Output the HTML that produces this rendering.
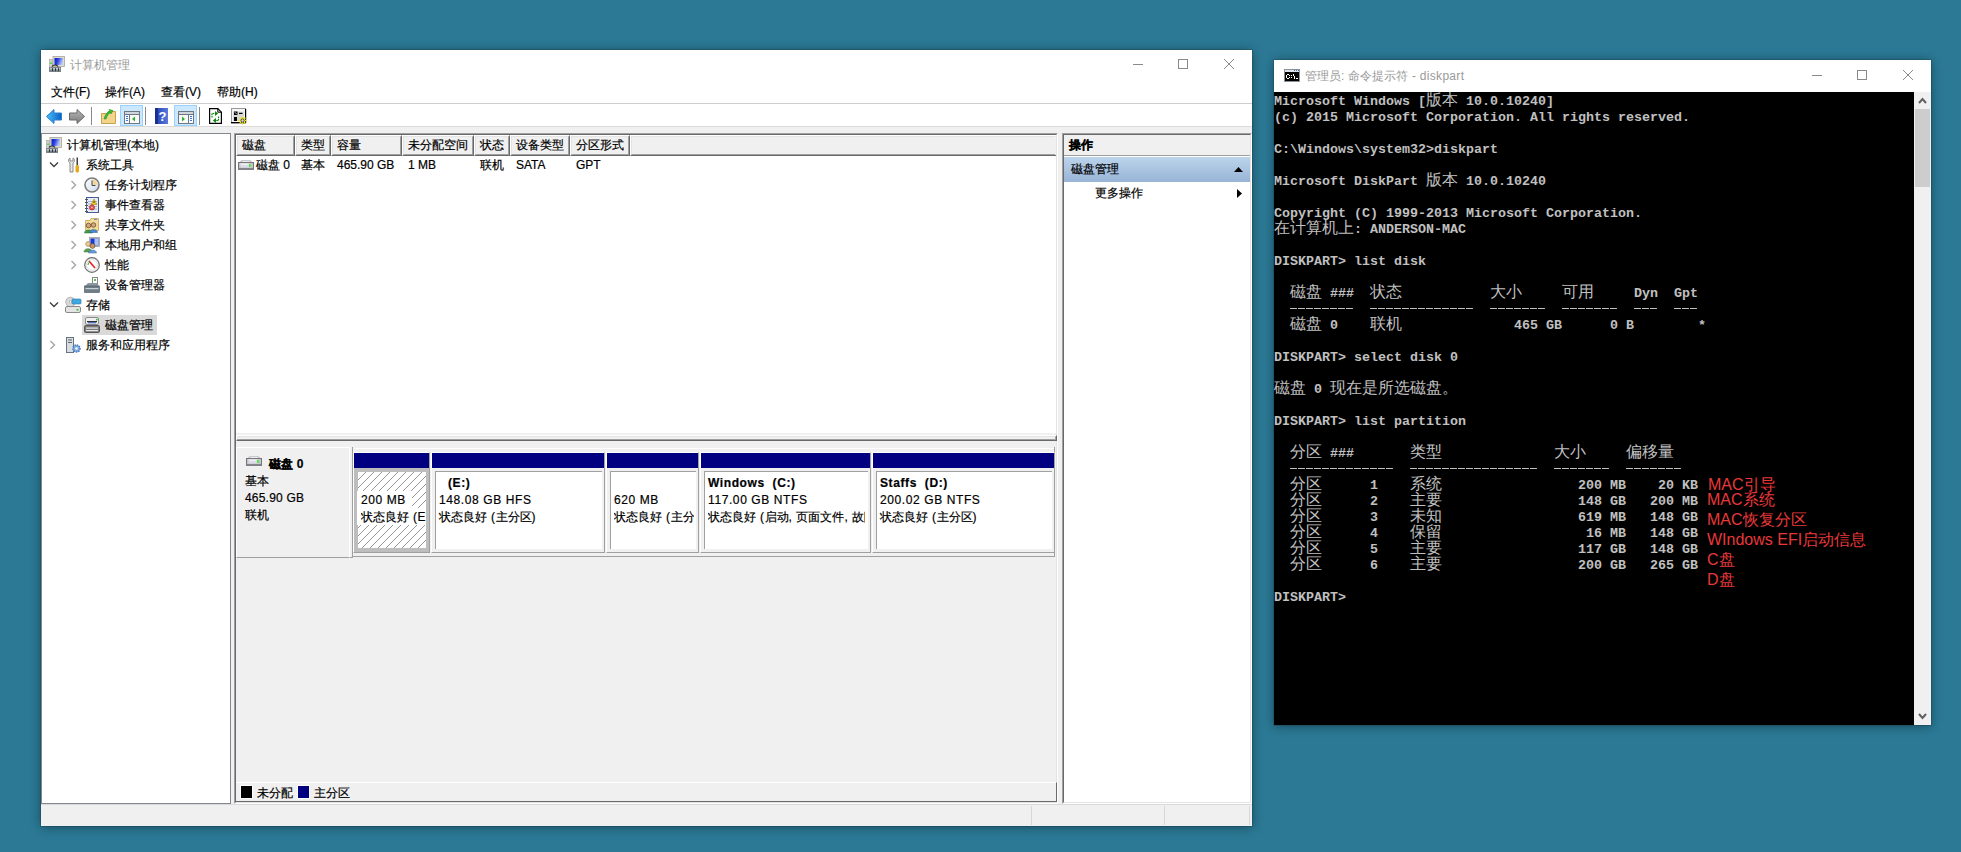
<!DOCTYPE html>
<html><head><meta charset="utf-8"><style>
html,body{margin:0;padding:0}
body{width:1961px;height:852px;position:relative;overflow:hidden;background:#2b7995;font-family:"Liberation Sans",sans-serif;font-size:12px;color:#000}
div{box-sizing:border-box;-webkit-text-stroke:0.2px currentColor}
.c,.k{-webkit-text-stroke:0}
.c{font-family:"Liberation Mono",monospace;font-weight:bold;font-size:13.34px;color:#c0c0c0}
.k{font-family:"Liberation Sans",sans-serif;font-weight:normal;font-size:16px;color:#c0c0c0}
svg{position:absolute;overflow:visible}
</style></head><body>

<div style="position:absolute;left:41px;top:50px;width:1211px;height:776px;background:#fff;box-shadow:0 0 0 1px rgba(0,0,0,0.12),0 1px 10px rgba(0,0,0,0.42)"></div>
<svg style="left:49px;top:56px" width="16" height="16" viewBox="0 0 16 16"><defs><linearGradient id="scr2" x1="0" y1="0" x2="1" y2="0.3"><stop offset="0" stop-color="#0a18c8"/><stop offset="0.45" stop-color="#2a40e0"/><stop offset="1" stop-color="#b8c8f8"/></linearGradient></defs><rect x="0.5" y="3.5" width="3" height="8" fill="#d0d0d0" stroke="#909090" stroke-width="0.5"/><rect x="1" y="6.5" width="2" height="1.5" fill="#40e040"/><rect x="4" y="0.5" width="11.5" height="10" fill="#e0ddd0" stroke="#a8a498" stroke-width="0.8"/><rect x="5.5" y="2" width="8.5" height="7" fill="url(#scr2)"/><path d="M3 10.5 C4 8.5 8 8.5 9 10.5" stroke="#222" stroke-width="1.2" fill="none"/><rect x="0" y="11" width="12" height="5" fill="#7a868e"/><rect x="1" y="12.2" width="10" height="1.2" fill="#d8dee2"/><rect x="3" y="12.2" width="1" height="3" fill="#333"/><rect x="6" y="12.2" width="1" height="3" fill="#333"/><rect x="9" y="12.2" width="1" height="3" fill="#333"/></svg>
<div style="position:absolute;left:70px;top:57px;line-height:16px;white-space:pre;color:#9a9a9a;font-size:12px;-webkit-text-stroke:0">计算机管理</div>
<svg style="left:1128px;top:54px" width="20" height="20"><line x1="5" y1="10.5" x2="15" y2="10.5" stroke="#8a8a8a" stroke-width="1"/></svg>
<svg style="left:1173px;top:54px" width="20" height="20"><rect x="5.5" y="5.5" width="9" height="9" fill="none" stroke="#8a8a8a" stroke-width="1"/></svg>
<svg style="left:1219px;top:54px" width="20" height="20"><path d="M5 5 L15 15 M15 5 L5 15" stroke="#8a8a8a" stroke-width="1"/></svg>
<div style="position:absolute;left:51px;top:84px;line-height:16px;white-space:pre;font-size:12px">文件(F)</div>
<div style="position:absolute;left:105px;top:84px;line-height:16px;white-space:pre;font-size:12px">操作(A)</div>
<div style="position:absolute;left:161px;top:84px;line-height:16px;white-space:pre;font-size:12px">查看(V)</div>
<div style="position:absolute;left:217px;top:84px;line-height:16px;white-space:pre;font-size:12px">帮助(H)</div>
<div style="position:absolute;left:41px;top:103px;width:1211px;height:1px;background:#cdcdcd"></div>
<svg style="left:46px;top:109px" width="16" height="15" viewBox="0 0 16 15">
<defs><linearGradient id="gb" x1="0" y1="0" x2="1" y2="0"><stop offset="0" stop-color="#48c0ff"/><stop offset="1" stop-color="#0a5fc0"/></linearGradient></defs>
<path d="M0.5 7.5 L8 0.5 L8 4 L15.5 4 L15.5 11 L8 11 L8 14.5 Z" fill="url(#gb)" stroke="#2f7fd0" stroke-width="1"/></svg>
<svg style="left:69px;top:109px" width="16" height="15" viewBox="0 0 16 15">
<defs><linearGradient id="gg" x1="0" y1="0" x2="0" y2="1"><stop offset="0" stop-color="#b8b8b8"/><stop offset="1" stop-color="#7a7a7a"/></linearGradient></defs>
<path d="M15.5 7.5 L8 0.5 L8 4 L0.5 4 L0.5 11 L8 11 L8 14.5 Z" fill="url(#gg)" stroke="#6a6a6a" stroke-width="1"/></svg>
<div style="position:absolute;left:91px;top:107px;width:1px;height:18px;background:#888"></div>
<div style="position:absolute;left:145px;top:107px;width:1px;height:18px;background:#888"></div>
<div style="position:absolute;left:199px;top:107px;width:1px;height:18px;background:#888"></div>
<svg style="left:101px;top:109px" width="15" height="15" viewBox="0 0 15 15">
<path d="M0.5 4.5 L6 4.5 L7 2.5 L14.5 2.5 L14.5 14.5 L0.5 14.5 Z" fill="#f2d58a" stroke="#c9a050" stroke-width="1"/>
<path d="M3 10 C4 6 6 3 9 2 L8 0.5 L12 1.5 L10 5 L9.5 3.5 C7 5 6 7 5 10 Z" fill="#36c036" stroke="#229022" stroke-width="0.6"/></svg>
<div style="position:absolute;left:120px;top:105px;width:23px;height:21px;background:#cce8ff;border:1px solid #99d1ff"></div>
<div style="position:absolute;left:174px;top:105px;width:23px;height:21px;background:#cce8ff;border:1px solid #99d1ff"></div>
<svg style="left:124px;top:111px" width="16" height="13" viewBox="0 0 16 13">
<rect x="0.5" y="0.5" width="15" height="12" fill="#fafafa" stroke="#6e7880"/><rect x="1" y="1" width="14" height="2" fill="#d0d6dc"/>
<line x1="1" y1="3.5" x2="15" y2="3.5" stroke="#6e7880"/><line x1="5.5" y1="4" x2="5.5" y2="12" stroke="#6e7880"/>
<rect x="2" y="5" width="2" height="1" fill="#3a7ad0"/><rect x="2" y="7" width="2" height="1" fill="#3a7ad0"/><rect x="2" y="9" width="2" height="1" fill="#3a7ad0"/>
<path d="M11 5.5 L8 8 L11 10.5 Z" fill="#30b030"/></svg>
<svg style="left:178px;top:111px" width="16" height="13" viewBox="0 0 16 13">
<rect x="0.5" y="0.5" width="15" height="12" fill="#fafafa" stroke="#6e7880"/><rect x="1" y="1" width="14" height="2" fill="#d0d6dc"/>
<line x1="1" y1="3.5" x2="15" y2="3.5" stroke="#6e7880"/><line x1="10.5" y1="4" x2="10.5" y2="12" stroke="#6e7880"/>
<rect x="12" y="5" width="2" height="1" fill="#3a7ad0"/><rect x="12" y="7" width="2" height="1" fill="#3a7ad0"/><rect x="12" y="9" width="2" height="1" fill="#3a7ad0"/>
<path d="M4 5.5 L7 8 L4 10.5 Z" fill="#30b030"/></svg>
<svg style="left:155px;top:108px" width="13" height="16" viewBox="0 0 13 16">
<defs><linearGradient id="hb" x1="0" y1="0" x2="1" y2="0"><stop offset="0" stop-color="#2040b0"/><stop offset="1" stop-color="#5a7ae0"/></linearGradient></defs>
<rect x="0" y="0" width="13" height="16" fill="url(#hb)"/><rect x="0" y="0" width="3" height="16" fill="#1a2f90"/>
<text x="7.5" y="13" font-family="Liberation Sans" font-weight="bold" font-size="13" fill="#fff" text-anchor="middle">?</text></svg>
<svg style="left:209px;top:108px" width="13" height="16" viewBox="0 0 13 16">
<path d="M0.6 0.6 L8.8 0.6 L12.4 4.2 L12.4 15.4 L0.6 15.4 Z" fill="#fff" stroke="#000" stroke-width="1.2"/><path d="M8.8 0.6 L8.8 4.2 L12.4 4.2" fill="none" stroke="#000" stroke-width="1"/>
<path d="M3 9.5 L3 5.5 L7 5.5" fill="none" stroke="#0a8a0a" stroke-width="1.2" stroke-dasharray="1.6 0.7"/><path d="M6 3 L9.2 5.5 L6 8 Z" fill="#0a8a0a"/>
<path d="M9.5 8.5 L9.5 12.5 L6 12.5" fill="none" stroke="#0a8a0a" stroke-width="1.2" stroke-dasharray="1.6 0.7"/><path d="M7 10 L3.8 12.5 L7 15 Z" fill="#0a8a0a"/></svg>
<svg style="left:231px;top:108px" width="16" height="17" viewBox="0 0 16 17">
<rect x="0.5" y="0.5" width="14" height="14" fill="#f4f4f4" stroke="#9a9a9a"/><rect x="0" y="14" width="15" height="1.4" fill="#000"/><rect x="14" y="1" width="1.2" height="14" fill="#000"/>
<rect x="2" y="2" width="11" height="11" fill="#d8d8d8"/><rect x="2" y="2" width="11" height="1.5" fill="#f8f8f8"/>
<rect x="3" y="3.5" width="3.5" height="3.5" fill="#000"/><path d="M3.8 4.2 L5.8 6.2" stroke="#fff" stroke-width="0.8"/><rect x="8" y="4.8" width="3.5" height="1.2" fill="#000"/><rect x="3" y="9" width="3" height="4" fill="#000"/>
<g stroke="#f0e818" stroke-width="1.3" stroke-linecap="round"><path d="M11.5 9 L11.5 16"/><path d="M8 12.5 L15 12.5"/><path d="M9 10 L14 15"/><path d="M14 10 L9 15"/></g><circle cx="11.5" cy="12.5" r="1.6" fill="#d8d8d8" stroke="#000" stroke-width="0.6"/></svg>
<div style="position:absolute;left:41px;top:126px;width:1211px;height:1px;background:#dadada"></div>
<div style="position:absolute;left:41px;top:127px;width:1211px;height:677px;background:#f0f0f0"></div>
<div style="position:absolute;left:41px;top:133px;width:190px;height:671px;background:#fff;border:1px solid #828790"></div>
<svg style="left:46px;top:137px" width="16" height="16" viewBox="0 0 16 16"><defs><linearGradient id="scr" x1="0" y1="0" x2="1" y2="0.3"><stop offset="0" stop-color="#0a18c8"/><stop offset="0.45" stop-color="#2a40e0"/><stop offset="1" stop-color="#b8c8f8"/></linearGradient></defs><rect x="0.5" y="3.5" width="3" height="8" fill="#d0d0d0" stroke="#909090" stroke-width="0.5"/><rect x="1" y="6.5" width="2" height="1.5" fill="#40e040"/><rect x="4" y="0.5" width="11.5" height="10" fill="#e0ddd0" stroke="#a8a498" stroke-width="0.8"/><rect x="5.5" y="2" width="8.5" height="7" fill="url(#scr)"/><path d="M3 10.5 C4 8.5 8 8.5 9 10.5" stroke="#222" stroke-width="1.2" fill="none"/><rect x="0" y="11" width="12" height="5" fill="#7a868e"/><rect x="1" y="12.2" width="10" height="1.2" fill="#d8dee2"/><rect x="3" y="12.2" width="1" height="3" fill="#333"/><rect x="6" y="12.2" width="1" height="3" fill="#333"/><rect x="9" y="12.2" width="1" height="3" fill="#333"/></svg>
<div style="position:absolute;left:67px;top:137px;line-height:16px;white-space:pre;font-size:12px">计算机管理(本地)</div>
<svg style="left:49px;top:161px" width="10" height="7"><path d="M1 1.5 L5 5.5 L9 1.5" fill="none" stroke="#404040" stroke-width="1.4"/></svg>
<svg style="left:67px;top:157px" width="16" height="16" viewBox="0 0 16 16"><path d="M3 1 C1 2 1 5 3 6 L3 15 L6 15 L6 6 C8 5 8 2 6 1 L6 4 L3 4 Z" fill="#e8e8e8" stroke="#707070" stroke-width="0.8"/><rect x="9.5" y="0.5" width="1.5" height="8" fill="#404040"/><rect x="8.5" y="8" width="3.5" height="7.5" rx="1.5" fill="#e8a818"/></svg>
<div style="position:absolute;left:86px;top:157px;line-height:16px;white-space:pre;font-size:12px">系统工具</div>
<svg style="left:70px;top:180px" width="7" height="10"><path d="M1.5 1 L5.5 5 L1.5 9" fill="none" stroke="#a6a6a6" stroke-width="1.4"/></svg>
<svg style="left:84px;top:177px" width="16" height="16" viewBox="0 0 16 16"><defs><linearGradient id="cf" x1="0" y1="0" x2="1" y2="1"><stop offset="0" stop-color="#ffffff"/><stop offset="1" stop-color="#d0dcea"/></linearGradient></defs><circle cx="8" cy="8" r="7" fill="url(#cf)" stroke="#7c7c7c" stroke-width="1.6"/><path d="M8 2.2 A5.8 5.8 0 0 1 13.8 8 L8 8 Z" fill="#f2d898"/><path d="M8 3.5 L8 8.5 L11.5 8.5" stroke="#3a4a6a" stroke-width="1" fill="none"/></svg>
<div style="position:absolute;left:105px;top:177px;line-height:16px;white-space:pre;font-size:12px">任务计划程序</div>
<svg style="left:70px;top:200px" width="7" height="10"><path d="M1.5 1 L5.5 5 L1.5 9" fill="none" stroke="#a6a6a6" stroke-width="1.4"/></svg>
<svg style="left:84px;top:197px" width="16" height="16" viewBox="0 0 16 16"><rect x="2.5" y="0.5" width="12" height="15" fill="#e6ecf8" stroke="#4a5a98"/><line x1="4" y1="4.5" x2="13" y2="4.5" stroke="#98a8d0" stroke-width="0.8"/><line x1="4" y1="7" x2="13" y2="7" stroke="#98a8d0" stroke-width="0.8"/><line x1="4" y1="9.5" x2="13" y2="9.5" stroke="#98a8d0" stroke-width="0.8"/><line x1="4" y1="12" x2="13" y2="12" stroke="#98a8d0" stroke-width="0.8"/><g fill="#555"><rect x="1" y="2" width="3" height="1"/><rect x="1" y="5" width="3" height="1"/><rect x="1" y="8" width="3" height="1"/><rect x="1" y="11" width="3" height="1"/><rect x="1" y="14" width="3" height="1"/></g><path d="M10 2 L13 7.5 L7 7.5 Z" fill="#f4c818" stroke="#9a7a10" stroke-width="0.5"/><rect x="9.6" y="4" width="0.9" height="2" fill="#333"/><circle cx="8" cy="10.5" r="2.6" fill="#e03838" stroke="#a02020" stroke-width="0.5"/><path d="M7 9.5 L9 11.5 M9 9.5 L7 11.5" stroke="#fff" stroke-width="0.8"/></svg>
<div style="position:absolute;left:105px;top:197px;line-height:16px;white-space:pre;font-size:12px">事件查看器</div>
<svg style="left:70px;top:220px" width="7" height="10"><path d="M1.5 1 L5.5 5 L1.5 9" fill="none" stroke="#a6a6a6" stroke-width="1.4"/></svg>
<svg style="left:84px;top:217px" width="16" height="16" viewBox="0 0 16 16"><path d="M1.5 3.5 L6 3.5 L7 1.5 L14.5 1.5 L14.5 13.5 L1.5 13.5 Z" fill="#f4dc98" stroke="#c8a050" stroke-width="0.8"/><rect x="10" y="2" width="3" height="1" fill="#5a8ad8"/><circle cx="4.5" cy="8.5" r="2.3" fill="#d8a878" stroke="#3a2a20" stroke-width="0.6"/><path d="M0.5 16 C0.5 12 8.5 12 8.5 16 Z" fill="#3aa048" stroke="#2a6a30" stroke-width="0.5"/><circle cx="9.5" cy="8" r="2.3" fill="#d8a878" stroke="#3a2a20" stroke-width="0.6"/><path d="M5.5 15.5 C5.5 11.5 13.5 11.5 13.5 15.5 Z" fill="#4a88d0" stroke="#2a5a90" stroke-width="0.5"/></svg>
<div style="position:absolute;left:105px;top:217px;line-height:16px;white-space:pre;font-size:12px">共享文件夹</div>
<svg style="left:70px;top:240px" width="7" height="10"><path d="M1.5 1 L5.5 5 L1.5 9" fill="none" stroke="#a6a6a6" stroke-width="1.4"/></svg>
<svg style="left:84px;top:237px" width="16" height="16" viewBox="0 0 16 16"><rect x="5.5" y="0.5" width="10" height="9" fill="#c8c8c0" stroke="#a0a098" stroke-width="0.8"/><rect x="6.5" y="1.5" width="8" height="7" fill="#1a3ad8"/><rect x="10.5" y="1.5" width="4" height="7" fill="#a8c0f4"/><circle cx="4" cy="7" r="2.4" fill="#e8c890" stroke="#8a7040" stroke-width="0.5"/><path d="M0 15 C0 10.5 8 10.5 8 15 Z" fill="#58a050" stroke="#3a7038" stroke-width="0.5"/><circle cx="8.5" cy="9" r="2.4" fill="#c89868" stroke="#5a3a20" stroke-width="0.6"/><path d="M4.5 16 C4.5 12 12.5 12 12.5 16 Z" fill="#6a9ad8" stroke="#3a6aa0" stroke-width="0.5"/></svg>
<div style="position:absolute;left:105px;top:237px;line-height:16px;white-space:pre;font-size:12px">本地用户和组</div>
<svg style="left:70px;top:260px" width="7" height="10"><path d="M1.5 1 L5.5 5 L1.5 9" fill="none" stroke="#a6a6a6" stroke-width="1.4"/></svg>
<svg style="left:84px;top:257px" width="16" height="16" viewBox="0 0 16 16"><circle cx="8" cy="8" r="7.3" fill="#f4f4f4" stroke="#707070" stroke-width="1.2"/><circle cx="8" cy="8" r="5.3" fill="#fff" stroke="#ccc" stroke-width="0.5"/><path d="M5 4 L11 11" stroke="#e02020" stroke-width="1.6"/><path d="M4 8 A4 4 0 0 1 6 4.5" stroke="#40a040" fill="none" stroke-width="1"/></svg>
<div style="position:absolute;left:105px;top:257px;line-height:16px;white-space:pre;font-size:12px">性能</div>
<svg style="left:84px;top:277px" width="16" height="16" viewBox="0 0 16 16"><rect x="8.5" y="0.5" width="5" height="7" fill="#fff" stroke="#888"/><rect x="10" y="2" width="2" height="2" fill="#60c060"/><path d="M1 9 L4 6 L13 6 L15 9 Z" fill="#8a96a0"/><rect x="0.5" y="9" width="15" height="6.5" fill="#6f7c86" stroke="#4a545c" stroke-width="0.6"/><rect x="1.5" y="11" width="13" height="1.2" fill="#c8d0d6"/></svg>
<div style="position:absolute;left:105px;top:277px;line-height:16px;white-space:pre;font-size:12px">设备管理器</div>
<svg style="left:49px;top:301px" width="10" height="7"><path d="M1 1.5 L5 5.5 L9 1.5" fill="none" stroke="#404040" stroke-width="1.4"/></svg>
<svg style="left:65px;top:297px" width="16" height="16" viewBox="0 0 16 16"><circle cx="5.5" cy="5" r="4.8" fill="#d8d8d8" stroke="#909090" stroke-width="0.6"/><circle cx="5.5" cy="5" r="1.2" fill="#fff" stroke="#888" stroke-width="0.5"/><rect x="7" y="2" width="9" height="5" rx="1" fill="#40a8e0" stroke="#2a78b0" stroke-width="0.6"/><rect x="0.5" y="9.5" width="15" height="6" rx="1.5" fill="#e4e4e4" stroke="#8a8a8a"/><rect x="11.5" y="12" width="2" height="1.5" fill="#30c030"/></svg>
<div style="position:absolute;left:86px;top:297px;line-height:16px;white-space:pre;font-size:12px">存储</div>
<div style="position:absolute;left:82px;top:315px;width:75px;height:20px;background:#d9d9d9"></div>
<svg style="left:84px;top:317px" width="16" height="16" viewBox="0 0 16 16"><rect x="1.5" y="0.5" width="13" height="7" rx="1.5" fill="#f0f0f0" stroke="#8a8a8a"/><rect x="3" y="4" width="10" height="1.3" fill="#303030"/><rect x="4" y="5.3" width="8" height="1" fill="#2a50c0"/><rect x="12" y="1.8" width="1.6" height="1.6" fill="#30c030"/><rect x="0.5" y="8.5" width="15" height="7" rx="1.2" fill="#7a7a7a" stroke="#555"/><rect x="2" y="10.5" width="12" height="1.2" fill="#e8e8e8"/><rect x="2" y="13" width="12" height="1.2" fill="#e8e8e8"/></svg>
<div style="position:absolute;left:105px;top:317px;line-height:16px;white-space:pre;font-size:12px">磁盘管理</div>
<svg style="left:49px;top:340px" width="7" height="10"><path d="M1.5 1 L5.5 5 L1.5 9" fill="none" stroke="#a6a6a6" stroke-width="1.4"/></svg>
<svg style="left:65px;top:337px" width="16" height="16" viewBox="0 0 16 16"><rect x="1.5" y="0.5" width="7" height="15" fill="#d8dde2" stroke="#6a7480"/><rect x="3" y="2.5" width="4" height="1" fill="#5a6470"/><rect x="3" y="5" width="4" height="1" fill="#5a6470"/><circle cx="11.5" cy="11.5" r="3.6" fill="#7aaae0" stroke="#4a7ab8" stroke-width="1.4" stroke-dasharray="1.4 1"/><circle cx="11.5" cy="11.5" r="1.2" fill="#fff"/></svg>
<div style="position:absolute;left:86px;top:337px;line-height:16px;white-space:pre;font-size:12px">服务和应用程序</div>
<div style="position:absolute;left:234px;top:133px;width:824px;height:671px;border-top:1px solid #a0a0a0;border-left:1px solid #a0a0a0;border-right:1px solid #fff;border-bottom:1px solid #fff"></div>
<div style="position:absolute;left:235px;top:134px;width:822px;height:669px;border-top:1px solid #696969;border-left:1px solid #696969;border-right:1px solid #e3e3e3;border-bottom:1px solid #e3e3e3;background:#f0f0f0"></div>
<div style="position:absolute;left:236px;top:135px;width:820px;height:298px;background:#fff"></div>
<div style="position:absolute;left:236px;top:135px;width:59px;height:21px;background:#f0f0f0;border-top:1px solid #fff;border-left:1px solid #fff;border-right:1px solid #696969;border-bottom:1px solid #696969"></div>
<div style="position:absolute;left:237px;top:136px;width:57px;height:19px;border-top:1px solid #e3e3e3;border-left:1px solid #e3e3e3;border-right:1px solid #a0a0a0;border-bottom:1px solid #a0a0a0"></div>
<div style="position:absolute;left:242px;top:137px;line-height:16px;white-space:pre;font-size:12px">磁盘</div>
<div style="position:absolute;left:295px;top:135px;width:36px;height:21px;background:#f0f0f0;border-top:1px solid #fff;border-left:1px solid #fff;border-right:1px solid #696969;border-bottom:1px solid #696969"></div>
<div style="position:absolute;left:296px;top:136px;width:34px;height:19px;border-top:1px solid #e3e3e3;border-left:1px solid #e3e3e3;border-right:1px solid #a0a0a0;border-bottom:1px solid #a0a0a0"></div>
<div style="position:absolute;left:301px;top:137px;line-height:16px;white-space:pre;font-size:12px">类型</div>
<div style="position:absolute;left:331px;top:135px;width:71px;height:21px;background:#f0f0f0;border-top:1px solid #fff;border-left:1px solid #fff;border-right:1px solid #696969;border-bottom:1px solid #696969"></div>
<div style="position:absolute;left:332px;top:136px;width:69px;height:19px;border-top:1px solid #e3e3e3;border-left:1px solid #e3e3e3;border-right:1px solid #a0a0a0;border-bottom:1px solid #a0a0a0"></div>
<div style="position:absolute;left:337px;top:137px;line-height:16px;white-space:pre;font-size:12px">容量</div>
<div style="position:absolute;left:402px;top:135px;width:72px;height:21px;background:#f0f0f0;border-top:1px solid #fff;border-left:1px solid #fff;border-right:1px solid #696969;border-bottom:1px solid #696969"></div>
<div style="position:absolute;left:403px;top:136px;width:70px;height:19px;border-top:1px solid #e3e3e3;border-left:1px solid #e3e3e3;border-right:1px solid #a0a0a0;border-bottom:1px solid #a0a0a0"></div>
<div style="position:absolute;left:408px;top:137px;line-height:16px;white-space:pre;font-size:12px">未分配空间</div>
<div style="position:absolute;left:474px;top:135px;width:36px;height:21px;background:#f0f0f0;border-top:1px solid #fff;border-left:1px solid #fff;border-right:1px solid #696969;border-bottom:1px solid #696969"></div>
<div style="position:absolute;left:475px;top:136px;width:34px;height:19px;border-top:1px solid #e3e3e3;border-left:1px solid #e3e3e3;border-right:1px solid #a0a0a0;border-bottom:1px solid #a0a0a0"></div>
<div style="position:absolute;left:480px;top:137px;line-height:16px;white-space:pre;font-size:12px">状态</div>
<div style="position:absolute;left:510px;top:135px;width:60px;height:21px;background:#f0f0f0;border-top:1px solid #fff;border-left:1px solid #fff;border-right:1px solid #696969;border-bottom:1px solid #696969"></div>
<div style="position:absolute;left:511px;top:136px;width:58px;height:19px;border-top:1px solid #e3e3e3;border-left:1px solid #e3e3e3;border-right:1px solid #a0a0a0;border-bottom:1px solid #a0a0a0"></div>
<div style="position:absolute;left:516px;top:137px;line-height:16px;white-space:pre;font-size:12px">设备类型</div>
<div style="position:absolute;left:570px;top:135px;width:60px;height:21px;background:#f0f0f0;border-top:1px solid #fff;border-left:1px solid #fff;border-right:1px solid #696969;border-bottom:1px solid #696969"></div>
<div style="position:absolute;left:571px;top:136px;width:58px;height:19px;border-top:1px solid #e3e3e3;border-left:1px solid #e3e3e3;border-right:1px solid #a0a0a0;border-bottom:1px solid #a0a0a0"></div>
<div style="position:absolute;left:576px;top:137px;line-height:16px;white-space:pre;font-size:12px">分区形式</div>
<div style="position:absolute;left:630px;top:135px;width:426px;height:21px;background:#f0f0f0;border-top:1px solid #fff;border-left:1px solid #fff;border-right:none;border-bottom:1px solid #696969"></div>
<div style="position:absolute;left:631px;top:136px;width:424px;height:19px;border-top:1px solid #e3e3e3;border-left:1px solid #e3e3e3;border-right:none;border-bottom:1px solid #a0a0a0"></div>
<svg style="left:238px;top:160px" width="16" height="10" viewBox="0 0 16 10"><path d="M3.5 0 H12.5 L15 2.5 H1 Z" fill="#cacace"/><rect x="4.5" y="1" width="7" height="1" fill="#ececf0"/><rect x="0.5" y="2.5" width="15" height="6.5" fill="#c4c4c8" stroke="#74767c"/><rect x="2.5" y="3.5" width="10" height="4" fill="#dcdcea"/><rect x="2.5" y="3.5" width="8" height="1" fill="#fafafa"/><rect x="11" y="4" width="1.6" height="3" fill="#38f020"/><rect x="0" y="8.5" width="16" height="1.2" fill="#6c6e74"/></svg>
<div style="position:absolute;left:256px;top:157px;line-height:16px;white-space:pre;font-size:12px">磁盘 0</div>
<div style="position:absolute;left:301px;top:157px;line-height:16px;white-space:pre;font-size:12px">基本</div>
<div style="position:absolute;left:337px;top:157px;line-height:16px;white-space:pre;font-size:12px">465.90 GB</div>
<div style="position:absolute;left:408px;top:157px;line-height:16px;white-space:pre;font-size:12px">1 MB</div>
<div style="position:absolute;left:480px;top:157px;line-height:16px;white-space:pre;font-size:12px">联机</div>
<div style="position:absolute;left:516px;top:157px;line-height:16px;white-space:pre;font-size:12px">SATA</div>
<div style="position:absolute;left:576px;top:157px;line-height:16px;white-space:pre;font-size:12px">GPT</div>
<div style="position:absolute;left:236px;top:435px;width:821px;height:6px;border-top:1px solid #fff;border-left:1px solid #fff;border-right:1px solid #696969;border-bottom:1px solid #696969"></div>
<div style="position:absolute;left:237px;top:436px;width:819px;height:4px;border-top:1px solid #e3e3e3;border-right:1px solid #a0a0a0;border-bottom:1px solid #a0a0a0"></div>
<div style="position:absolute;left:236px;top:447px;width:114px;height:111px;background:#f0f0f0;border-top:1px solid #fff;border-left:1px solid #fff;border-right:1px solid #fff;border-bottom:1px solid #a0a0a0"></div>
<div style="position:absolute;left:350px;top:557px;width:3px;height:1px;background:#a0a0a0"></div>
<svg style="left:246px;top:456px" width="16" height="10" viewBox="0 0 16 10"><path d="M3.5 0 H12.5 L15 2.5 H1 Z" fill="#cacace"/><rect x="4.5" y="1" width="7" height="1" fill="#ececf0"/><rect x="0.5" y="2.5" width="15" height="6.5" fill="#c4c4c8" stroke="#74767c"/><rect x="2.5" y="3.5" width="10" height="4" fill="#dcdcea"/><rect x="2.5" y="3.5" width="8" height="1" fill="#fafafa"/><rect x="11" y="4" width="1.6" height="3" fill="#38f020"/><rect x="0" y="8.5" width="16" height="1.2" fill="#6c6e74"/></svg>
<div style="position:absolute;left:269px;top:456px;line-height:16px;white-space:pre;font-size:12px;font-weight:bold">磁盘<span style="letter-spacing:0.3px"> 0</span></div>
<div style="position:absolute;left:245px;top:473px;line-height:16px;white-space:pre;font-size:12px">基本</div>
<div style="position:absolute;left:245px;top:490px;line-height:16px;white-space:pre;font-size:12px"><span style="letter-spacing:0.2px">465.90 GB</span></div>
<div style="position:absolute;left:245px;top:507px;line-height:16px;white-space:pre;font-size:12px">联机</div>
<div style="position:absolute;left:352px;top:447px;width:703px;height:110px;border-left:1px solid #a0a0a0;border-bottom:1px solid #a0a0a0;border-right:1px solid #a0a0a0"></div>
<div style="position:absolute;left:353px;top:448px;width:701px;height:1px;background:#fff"></div>
<div style="position:absolute;left:353px;top:452px;width:77px;height:101px;background:#f0f0f0;border-right:1px solid #a0a0a0;border-bottom:1px solid #a0a0a0;border-top:1px solid #fff;border-left:1px solid #fff"></div>
<div style="position:absolute;left:354px;top:453px;width:75px;height:15px;background:#000080"></div>
<div style="position:absolute;left:354px;top:468px;width:75px;height:84px;background:#bdbdbd"></div>
<svg style="left:358px;top:472px" width="68" height="76"><defs><pattern id="hatch" width="8" height="8" patternUnits="userSpaceOnUse"><path d="M-1 9 L9 -1" stroke="#8a8a8a" stroke-width="0.9"/></pattern></defs><rect width="100%" height="100%" fill="#fff"/><rect width="100%" height="100%" fill="url(#hatch)"/></svg>
<div style="position:absolute;left:431px;top:452px;width:174px;height:101px;background:#f0f0f0;border-right:1px solid #a0a0a0;border-bottom:1px solid #a0a0a0;border-top:1px solid #fff;border-left:1px solid #fff"></div>
<div style="position:absolute;left:432px;top:453px;width:172px;height:15px;background:#000080"></div>
<div style="position:absolute;left:435px;top:471px;width:167px;height:78px;background:#fff;border-top:1px solid #a0a0a0;border-left:1px solid #a0a0a0"></div>
<div style="position:absolute;left:606px;top:452px;width:93px;height:101px;background:#f0f0f0;border-right:1px solid #a0a0a0;border-bottom:1px solid #a0a0a0;border-top:1px solid #fff;border-left:1px solid #fff"></div>
<div style="position:absolute;left:607px;top:453px;width:91px;height:15px;background:#000080"></div>
<div style="position:absolute;left:610px;top:471px;width:86px;height:78px;background:#fff;border-top:1px solid #a0a0a0;border-left:1px solid #a0a0a0"></div>
<div style="position:absolute;left:700px;top:452px;width:171px;height:101px;background:#f0f0f0;border-right:1px solid #a0a0a0;border-bottom:1px solid #a0a0a0;border-top:1px solid #fff;border-left:1px solid #fff"></div>
<div style="position:absolute;left:701px;top:453px;width:169px;height:15px;background:#000080"></div>
<div style="position:absolute;left:704px;top:471px;width:164px;height:78px;background:#fff;border-top:1px solid #a0a0a0;border-left:1px solid #a0a0a0"></div>
<div style="position:absolute;left:872px;top:452px;width:183px;height:101px;background:#f0f0f0;border-right:1px solid #a0a0a0;border-bottom:1px solid #a0a0a0;border-top:1px solid #fff;border-left:1px solid #fff"></div>
<div style="position:absolute;left:873px;top:453px;width:181px;height:15px;background:#000080"></div>
<div style="position:absolute;left:876px;top:471px;width:176px;height:78px;background:#fff;border-top:1px solid #a0a0a0;border-left:1px solid #a0a0a0"></div>
<div style="position:absolute;left:357px;top:491px;width:55px;height:17px;background:#fff"></div>
<div style="position:absolute;left:361px;top:492px;line-height:16px;white-space:pre;font-size:12px"><span style="letter-spacing:0.6px">200 MB</span></div>
<div style="position:absolute;left:357px;top:508px;width:69px;height:17px;background:#fff"></div>
<div style="position:absolute;left:361px;top:509px;width:65px;overflow:hidden;line-height:16px;white-space:pre;font-size:12px">状态良好<span style="letter-spacing:0.6px"> (E</span></div>
<div style="position:absolute;left:448px;top:475px;line-height:16px;white-space:pre;font-size:12px;font-weight:bold"><span style="letter-spacing:0.6px">(E:)</span></div>
<div style="position:absolute;left:439px;top:492px;line-height:16px;white-space:pre;font-size:12px"><span style="letter-spacing:0.6px">148.08 GB HFS</span></div>
<div style="position:absolute;left:439px;top:509px;line-height:16px;white-space:pre;font-size:12px">状态良好<span style="letter-spacing:0.6px"> (</span>主分区<span style="letter-spacing:0.6px">)</span></div>
<div style="position:absolute;left:614px;top:492px;line-height:16px;white-space:pre;font-size:12px"><span style="letter-spacing:0.6px">620 MB</span></div>
<div style="position:absolute;left:614px;top:509px;width:80px;overflow:hidden;line-height:16px;white-space:pre;font-size:12px">状态良好<span style="letter-spacing:0.6px"> (</span>主分区<span style="letter-spacing:0.6px">)</span></div>
<div style="position:absolute;left:708px;top:475px;line-height:16px;white-space:pre;font-size:12px;font-weight:bold"><span style="letter-spacing:0.6px">Windows&nbsp; (C:)</span></div>
<div style="position:absolute;left:708px;top:492px;line-height:16px;white-space:pre;font-size:12px"><span style="letter-spacing:0.6px">117.00 GB NTFS</span></div>
<div style="position:absolute;left:708px;top:509px;width:157px;overflow:hidden;line-height:16px;white-space:pre;font-size:12px">状态良好<span style="letter-spacing:0.6px"> (</span>启动<span style="letter-spacing:0.6px">, </span>页面文件<span style="letter-spacing:0.6px">, </span>故障转储<span style="letter-spacing:0.6px">, </span>主分区<span style="letter-spacing:0.6px">)</span></div>
<div style="position:absolute;left:880px;top:475px;line-height:16px;white-space:pre;font-size:12px;font-weight:bold"><span style="letter-spacing:0.6px">Staffs&nbsp; (D:)</span></div>
<div style="position:absolute;left:880px;top:492px;line-height:16px;white-space:pre;font-size:12px"><span style="letter-spacing:0.6px">200.02 GB NTFS</span></div>
<div style="position:absolute;left:880px;top:509px;line-height:16px;white-space:pre;font-size:12px">状态良好<span style="letter-spacing:0.6px"> (</span>主分区<span style="letter-spacing:0.6px">)</span></div>
<div style="position:absolute;left:236px;top:782px;width:821px;height:20px;background:#f0f0f0;border-top:1px solid #fff;border-bottom:1px solid #696969;border-right:1px solid #696969"></div>
<div style="position:absolute;left:240px;top:785px;width:13px;height:14px;background:#000;border:1px solid #fff"></div>
<div style="position:absolute;left:257px;top:785px;line-height:16px;white-space:pre;font-size:12px">未分配</div>
<div style="position:absolute;left:297px;top:785px;width:13px;height:14px;background:#000080;border:1px solid #fff"></div>
<div style="position:absolute;left:314px;top:785px;line-height:16px;white-space:pre;font-size:12px">主分区</div>
<div style="position:absolute;left:1062px;top:133px;width:190px;height:671px;border-top:1px solid #a0a0a0;border-left:1px solid #a0a0a0;border-right:1px solid #fff;border-bottom:1px solid #fff"></div>
<div style="position:absolute;left:1063px;top:134px;width:188px;height:669px;border-top:1px solid #696969;border-left:1px solid #696969;border-right:1px solid #e3e3e3;border-bottom:1px solid #e3e3e3;background:#fff"></div>
<div style="position:absolute;left:1064px;top:135px;width:186px;height:21px;background:#f0f0f0;border-bottom:1px solid #a0a0a0"></div>
<div style="position:absolute;left:1069px;top:137px;line-height:16px;white-space:pre;font-size:12px;font-weight:bold">操作</div>
<div style="position:absolute;left:1064px;top:157px;width:186px;height:25px;background:linear-gradient(#bcd4ec,#98b4d6)"></div>
<div style="position:absolute;left:1071px;top:161px;line-height:16px;white-space:pre;font-size:12px">磁盘管理</div>
<svg style="left:1234px;top:166px" width="10" height="7"><path d="M0 6 L4.5 1 L9 6 Z" fill="#000"/></svg>
<div style="position:absolute;left:1095px;top:185px;line-height:16px;white-space:pre;font-size:12px">更多操作</div>
<svg style="left:1237px;top:189px" width="6" height="10"><path d="M0 0 L5 4.5 L0 9 Z" fill="#000"/></svg>
<div style="position:absolute;left:41px;top:804px;width:1211px;height:22px;background:#f0f0f0;border-top:1px solid #d9d9d9"></div>
<div style="position:absolute;left:1031px;top:806px;width:1px;height:19px;background:#d7d7d7"></div>
<div style="position:absolute;left:1164px;top:806px;width:1px;height:19px;background:#d7d7d7"></div>
<div style="position:absolute;left:1249px;top:806px;width:1px;height:19px;background:#d7d7d7"></div>
<div style="position:absolute;left:1274px;top:60px;width:657px;height:665px;background:#fff;box-shadow:0 0 0 1px rgba(0,0,0,0.12),0 1px 10px rgba(0,0,0,0.42)"></div>
<svg style="left:1284px;top:69px" width="16" height="13" viewBox="0 0 16 13" shape-rendering="crispEdges"><rect x="0" y="0" width="16" height="13" fill="#8c9098"/><rect x="1" y="1" width="14" height="2" fill="#dde2ea"/><rect x="10" y="1" width="1" height="1" fill="#4a70b0"/><rect x="12" y="1" width="1" height="1" fill="#4a70b0"/><rect x="14" y="1" width="1" height="1" fill="#4a70b0"/><rect x="1" y="3" width="14" height="9" fill="#000"/><g fill="#fff"><rect x="3" y="5" width="2" height="1"/><rect x="2" y="6" width="1" height="3"/><rect x="3" y="9" width="2" height="1"/><rect x="5" y="6" width="1" height="1"/><rect x="5" y="8" width="1" height="1"/><rect x="7" y="6" width="1" height="1"/><rect x="7" y="8" width="1" height="1"/><rect x="9" y="5" width="1" height="2"/><rect x="10" y="7" width="1" height="3"/><rect x="12" y="9" width="2" height="1"/></g></svg>
<div style="position:absolute;left:1305px;top:68px;line-height:16px;white-space:pre;color:#9a9a9a;font-size:12px;-webkit-text-stroke:0">管理员<span style="letter-spacing:0.3px">: </span>命令提示符<span style="letter-spacing:0.3px"> - diskpart</span></div>
<svg style="left:1807px;top:65px" width="20" height="20"><line x1="5" y1="10.5" x2="15" y2="10.5" stroke="#8a8a8a" stroke-width="1"/></svg>
<svg style="left:1852px;top:65px" width="20" height="20"><rect x="5.5" y="5.5" width="9" height="9" fill="none" stroke="#8a8a8a" stroke-width="1"/></svg>
<svg style="left:1898px;top:65px" width="20" height="20"><path d="M5 5 L15 15 M15 5 L5 15" stroke="#8a8a8a" stroke-width="1"/></svg>
<div style="position:absolute;left:1274px;top:92px;width:640px;height:633px;background:#000"></div>
<div style="position:absolute;left:1914px;top:92px;width:17px;height:633px;background:#f0f0f0"></div>
<svg style="left:1918px;top:97px" width="10" height="8"><path d="M1 6 L4.5 2 L8 6" fill="none" stroke="#606060" stroke-width="2"/></svg>
<div style="position:absolute;left:1915px;top:109px;width:15px;height:78px;background:#cdcdcd"></div>
<svg style="left:1918px;top:712px" width="10" height="8"><path d="M1 2 L4.5 6 L8 2" fill="none" stroke="#606060" stroke-width="2"/></svg>
<div class="c" style="position:absolute;left:1274px;top:94px;line-height:16px;white-space:pre">Microsoft</div>
<div class="c" style="position:absolute;left:1354px;top:94px;line-height:16px;white-space:pre">Windows</div>
<div class="c" style="position:absolute;left:1418px;top:94px;line-height:16px;white-space:pre">[</div>
<div class="k" style="position:absolute;left:1426px;top:92px;width:16px;line-height:16px;text-align:center">版</div>
<div class="k" style="position:absolute;left:1442px;top:92px;width:16px;line-height:16px;text-align:center">本</div>
<div class="c" style="position:absolute;left:1466px;top:94px;line-height:16px;white-space:pre">10.0.10240]</div>
<div class="c" style="position:absolute;left:1274px;top:110px;line-height:16px;white-space:pre">(c)</div>
<div class="c" style="position:absolute;left:1306px;top:110px;line-height:16px;white-space:pre">2015</div>
<div class="c" style="position:absolute;left:1346px;top:110px;line-height:16px;white-space:pre">Microsoft</div>
<div class="c" style="position:absolute;left:1426px;top:110px;line-height:16px;white-space:pre">Corporation.</div>
<div class="c" style="position:absolute;left:1530px;top:110px;line-height:16px;white-space:pre">All</div>
<div class="c" style="position:absolute;left:1562px;top:110px;line-height:16px;white-space:pre">rights</div>
<div class="c" style="position:absolute;left:1618px;top:110px;line-height:16px;white-space:pre">reserved.</div>
<div class="c" style="position:absolute;left:1274px;top:142px;line-height:16px;white-space:pre">C:\Windows\system32&gt;diskpart</div>
<div class="c" style="position:absolute;left:1274px;top:174px;line-height:16px;white-space:pre">Microsoft</div>
<div class="c" style="position:absolute;left:1354px;top:174px;line-height:16px;white-space:pre">DiskPart</div>
<div class="k" style="position:absolute;left:1426px;top:172px;width:16px;line-height:16px;text-align:center">版</div>
<div class="k" style="position:absolute;left:1442px;top:172px;width:16px;line-height:16px;text-align:center">本</div>
<div class="c" style="position:absolute;left:1466px;top:174px;line-height:16px;white-space:pre">10.0.10240</div>
<div class="c" style="position:absolute;left:1274px;top:206px;line-height:16px;white-space:pre">Copyright</div>
<div class="c" style="position:absolute;left:1354px;top:206px;line-height:16px;white-space:pre">(C)</div>
<div class="c" style="position:absolute;left:1386px;top:206px;line-height:16px;white-space:pre">1999-2013</div>
<div class="c" style="position:absolute;left:1466px;top:206px;line-height:16px;white-space:pre">Microsoft</div>
<div class="c" style="position:absolute;left:1546px;top:206px;line-height:16px;white-space:pre">Corporation.</div>
<div class="k" style="position:absolute;left:1274px;top:220px;width:16px;line-height:16px;text-align:center">在</div>
<div class="k" style="position:absolute;left:1290px;top:220px;width:16px;line-height:16px;text-align:center">计</div>
<div class="k" style="position:absolute;left:1306px;top:220px;width:16px;line-height:16px;text-align:center">算</div>
<div class="k" style="position:absolute;left:1322px;top:220px;width:16px;line-height:16px;text-align:center">机</div>
<div class="k" style="position:absolute;left:1338px;top:220px;width:16px;line-height:16px;text-align:center">上</div>
<div class="c" style="position:absolute;left:1354px;top:222px;line-height:16px;white-space:pre">:</div>
<div class="c" style="position:absolute;left:1370px;top:222px;line-height:16px;white-space:pre">ANDERSON-MAC</div>
<div class="c" style="position:absolute;left:1274px;top:254px;line-height:16px;white-space:pre">DISKPART&gt;</div>
<div class="c" style="position:absolute;left:1354px;top:254px;line-height:16px;white-space:pre">list</div>
<div class="c" style="position:absolute;left:1394px;top:254px;line-height:16px;white-space:pre">disk</div>
<div class="k" style="position:absolute;left:1290px;top:284px;width:16px;line-height:16px;text-align:center">磁</div>
<div class="k" style="position:absolute;left:1306px;top:284px;width:16px;line-height:16px;text-align:center">盘</div>
<div class="c" style="position:absolute;left:1330px;top:286px;line-height:16px;white-space:pre">###</div>
<div class="k" style="position:absolute;left:1370px;top:284px;width:16px;line-height:16px;text-align:center">状</div>
<div class="k" style="position:absolute;left:1386px;top:284px;width:16px;line-height:16px;text-align:center">态</div>
<div class="k" style="position:absolute;left:1490px;top:284px;width:16px;line-height:16px;text-align:center">大</div>
<div class="k" style="position:absolute;left:1506px;top:284px;width:16px;line-height:16px;text-align:center">小</div>
<div class="k" style="position:absolute;left:1562px;top:284px;width:16px;line-height:16px;text-align:center">可</div>
<div class="k" style="position:absolute;left:1578px;top:284px;width:16px;line-height:16px;text-align:center">用</div>
<div class="c" style="position:absolute;left:1634px;top:286px;line-height:16px;white-space:pre">Dyn</div>
<div class="c" style="position:absolute;left:1674px;top:286px;line-height:16px;white-space:pre">Gpt</div>
<div style="position:absolute;left:1290px;top:308px;width:64px;height:1px;background:repeating-linear-gradient(to right,#c0c0c0 0 7px,transparent 7px 8px)"></div>
<div style="position:absolute;left:1370px;top:308px;width:104px;height:1px;background:repeating-linear-gradient(to right,#c0c0c0 0 7px,transparent 7px 8px)"></div>
<div style="position:absolute;left:1490px;top:308px;width:56px;height:1px;background:repeating-linear-gradient(to right,#c0c0c0 0 7px,transparent 7px 8px)"></div>
<div style="position:absolute;left:1562px;top:308px;width:56px;height:1px;background:repeating-linear-gradient(to right,#c0c0c0 0 7px,transparent 7px 8px)"></div>
<div style="position:absolute;left:1634px;top:308px;width:24px;height:1px;background:repeating-linear-gradient(to right,#c0c0c0 0 7px,transparent 7px 8px)"></div>
<div style="position:absolute;left:1674px;top:308px;width:24px;height:1px;background:repeating-linear-gradient(to right,#c0c0c0 0 7px,transparent 7px 8px)"></div>
<div class="k" style="position:absolute;left:1290px;top:316px;width:16px;line-height:16px;text-align:center">磁</div>
<div class="k" style="position:absolute;left:1306px;top:316px;width:16px;line-height:16px;text-align:center">盘</div>
<div class="c" style="position:absolute;left:1330px;top:318px;line-height:16px;white-space:pre">0</div>
<div class="k" style="position:absolute;left:1370px;top:316px;width:16px;line-height:16px;text-align:center">联</div>
<div class="k" style="position:absolute;left:1386px;top:316px;width:16px;line-height:16px;text-align:center">机</div>
<div class="c" style="position:absolute;left:1514px;top:318px;line-height:16px;white-space:pre">465</div>
<div class="c" style="position:absolute;left:1546px;top:318px;line-height:16px;white-space:pre">GB</div>
<div class="c" style="position:absolute;left:1610px;top:318px;line-height:16px;white-space:pre">0</div>
<div class="c" style="position:absolute;left:1626px;top:318px;line-height:16px;white-space:pre">B</div>
<div class="c" style="position:absolute;left:1698px;top:318px;line-height:16px;white-space:pre">*</div>
<div class="c" style="position:absolute;left:1274px;top:350px;line-height:16px;white-space:pre">DISKPART&gt;</div>
<div class="c" style="position:absolute;left:1354px;top:350px;line-height:16px;white-space:pre">select</div>
<div class="c" style="position:absolute;left:1410px;top:350px;line-height:16px;white-space:pre">disk</div>
<div class="c" style="position:absolute;left:1450px;top:350px;line-height:16px;white-space:pre">0</div>
<div class="k" style="position:absolute;left:1274px;top:380px;width:16px;line-height:16px;text-align:center">磁</div>
<div class="k" style="position:absolute;left:1290px;top:380px;width:16px;line-height:16px;text-align:center">盘</div>
<div class="c" style="position:absolute;left:1314px;top:382px;line-height:16px;white-space:pre">0</div>
<div class="k" style="position:absolute;left:1330px;top:380px;width:16px;line-height:16px;text-align:center">现</div>
<div class="k" style="position:absolute;left:1346px;top:380px;width:16px;line-height:16px;text-align:center">在</div>
<div class="k" style="position:absolute;left:1362px;top:380px;width:16px;line-height:16px;text-align:center">是</div>
<div class="k" style="position:absolute;left:1378px;top:380px;width:16px;line-height:16px;text-align:center">所</div>
<div class="k" style="position:absolute;left:1394px;top:380px;width:16px;line-height:16px;text-align:center">选</div>
<div class="k" style="position:absolute;left:1410px;top:380px;width:16px;line-height:16px;text-align:center">磁</div>
<div class="k" style="position:absolute;left:1426px;top:380px;width:16px;line-height:16px;text-align:center">盘</div>
<div class="k" style="position:absolute;left:1442px;top:380px;width:16px;line-height:16px;text-align:center">。</div>
<div class="c" style="position:absolute;left:1274px;top:414px;line-height:16px;white-space:pre">DISKPART&gt;</div>
<div class="c" style="position:absolute;left:1354px;top:414px;line-height:16px;white-space:pre">list</div>
<div class="c" style="position:absolute;left:1394px;top:414px;line-height:16px;white-space:pre">partition</div>
<div class="k" style="position:absolute;left:1290px;top:444px;width:16px;line-height:16px;text-align:center">分</div>
<div class="k" style="position:absolute;left:1306px;top:444px;width:16px;line-height:16px;text-align:center">区</div>
<div class="c" style="position:absolute;left:1330px;top:446px;line-height:16px;white-space:pre">###</div>
<div class="k" style="position:absolute;left:1410px;top:444px;width:16px;line-height:16px;text-align:center">类</div>
<div class="k" style="position:absolute;left:1426px;top:444px;width:16px;line-height:16px;text-align:center">型</div>
<div class="k" style="position:absolute;left:1554px;top:444px;width:16px;line-height:16px;text-align:center">大</div>
<div class="k" style="position:absolute;left:1570px;top:444px;width:16px;line-height:16px;text-align:center">小</div>
<div class="k" style="position:absolute;left:1626px;top:444px;width:16px;line-height:16px;text-align:center">偏</div>
<div class="k" style="position:absolute;left:1642px;top:444px;width:16px;line-height:16px;text-align:center">移</div>
<div class="k" style="position:absolute;left:1658px;top:444px;width:16px;line-height:16px;text-align:center">量</div>
<div style="position:absolute;left:1290px;top:468px;width:104px;height:1px;background:repeating-linear-gradient(to right,#c0c0c0 0 7px,transparent 7px 8px)"></div>
<div style="position:absolute;left:1410px;top:468px;width:128px;height:1px;background:repeating-linear-gradient(to right,#c0c0c0 0 7px,transparent 7px 8px)"></div>
<div style="position:absolute;left:1554px;top:468px;width:56px;height:1px;background:repeating-linear-gradient(to right,#c0c0c0 0 7px,transparent 7px 8px)"></div>
<div style="position:absolute;left:1626px;top:468px;width:56px;height:1px;background:repeating-linear-gradient(to right,#c0c0c0 0 7px,transparent 7px 8px)"></div>
<div class="k" style="position:absolute;left:1290px;top:476px;width:16px;line-height:16px;text-align:center">分</div>
<div class="k" style="position:absolute;left:1306px;top:476px;width:16px;line-height:16px;text-align:center">区</div>
<div class="c" style="position:absolute;left:1370px;top:478px;line-height:16px;white-space:pre">1</div>
<div class="k" style="position:absolute;left:1410px;top:476px;width:16px;line-height:16px;text-align:center">系</div>
<div class="k" style="position:absolute;left:1426px;top:476px;width:16px;line-height:16px;text-align:center">统</div>
<div class="c" style="position:absolute;left:1578px;top:478px;line-height:16px;white-space:pre">200</div>
<div class="c" style="position:absolute;left:1610px;top:478px;line-height:16px;white-space:pre">MB</div>
<div class="c" style="position:absolute;left:1658px;top:478px;line-height:16px;white-space:pre">20</div>
<div class="c" style="position:absolute;left:1682px;top:478px;line-height:16px;white-space:pre">KB</div>
<div class="k" style="position:absolute;left:1290px;top:492px;width:16px;line-height:16px;text-align:center">分</div>
<div class="k" style="position:absolute;left:1306px;top:492px;width:16px;line-height:16px;text-align:center">区</div>
<div class="c" style="position:absolute;left:1370px;top:494px;line-height:16px;white-space:pre">2</div>
<div class="k" style="position:absolute;left:1410px;top:492px;width:16px;line-height:16px;text-align:center">主</div>
<div class="k" style="position:absolute;left:1426px;top:492px;width:16px;line-height:16px;text-align:center">要</div>
<div class="c" style="position:absolute;left:1578px;top:494px;line-height:16px;white-space:pre">148</div>
<div class="c" style="position:absolute;left:1610px;top:494px;line-height:16px;white-space:pre">GB</div>
<div class="c" style="position:absolute;left:1650px;top:494px;line-height:16px;white-space:pre">200</div>
<div class="c" style="position:absolute;left:1682px;top:494px;line-height:16px;white-space:pre">MB</div>
<div class="k" style="position:absolute;left:1290px;top:508px;width:16px;line-height:16px;text-align:center">分</div>
<div class="k" style="position:absolute;left:1306px;top:508px;width:16px;line-height:16px;text-align:center">区</div>
<div class="c" style="position:absolute;left:1370px;top:510px;line-height:16px;white-space:pre">3</div>
<div class="k" style="position:absolute;left:1410px;top:508px;width:16px;line-height:16px;text-align:center">未</div>
<div class="k" style="position:absolute;left:1426px;top:508px;width:16px;line-height:16px;text-align:center">知</div>
<div class="c" style="position:absolute;left:1578px;top:510px;line-height:16px;white-space:pre">619</div>
<div class="c" style="position:absolute;left:1610px;top:510px;line-height:16px;white-space:pre">MB</div>
<div class="c" style="position:absolute;left:1650px;top:510px;line-height:16px;white-space:pre">148</div>
<div class="c" style="position:absolute;left:1682px;top:510px;line-height:16px;white-space:pre">GB</div>
<div class="k" style="position:absolute;left:1290px;top:524px;width:16px;line-height:16px;text-align:center">分</div>
<div class="k" style="position:absolute;left:1306px;top:524px;width:16px;line-height:16px;text-align:center">区</div>
<div class="c" style="position:absolute;left:1370px;top:526px;line-height:16px;white-space:pre">4</div>
<div class="k" style="position:absolute;left:1410px;top:524px;width:16px;line-height:16px;text-align:center">保</div>
<div class="k" style="position:absolute;left:1426px;top:524px;width:16px;line-height:16px;text-align:center">留</div>
<div class="c" style="position:absolute;left:1586px;top:526px;line-height:16px;white-space:pre">16</div>
<div class="c" style="position:absolute;left:1610px;top:526px;line-height:16px;white-space:pre">MB</div>
<div class="c" style="position:absolute;left:1650px;top:526px;line-height:16px;white-space:pre">148</div>
<div class="c" style="position:absolute;left:1682px;top:526px;line-height:16px;white-space:pre">GB</div>
<div class="k" style="position:absolute;left:1290px;top:540px;width:16px;line-height:16px;text-align:center">分</div>
<div class="k" style="position:absolute;left:1306px;top:540px;width:16px;line-height:16px;text-align:center">区</div>
<div class="c" style="position:absolute;left:1370px;top:542px;line-height:16px;white-space:pre">5</div>
<div class="k" style="position:absolute;left:1410px;top:540px;width:16px;line-height:16px;text-align:center">主</div>
<div class="k" style="position:absolute;left:1426px;top:540px;width:16px;line-height:16px;text-align:center">要</div>
<div class="c" style="position:absolute;left:1578px;top:542px;line-height:16px;white-space:pre">117</div>
<div class="c" style="position:absolute;left:1610px;top:542px;line-height:16px;white-space:pre">GB</div>
<div class="c" style="position:absolute;left:1650px;top:542px;line-height:16px;white-space:pre">148</div>
<div class="c" style="position:absolute;left:1682px;top:542px;line-height:16px;white-space:pre">GB</div>
<div class="k" style="position:absolute;left:1290px;top:556px;width:16px;line-height:16px;text-align:center">分</div>
<div class="k" style="position:absolute;left:1306px;top:556px;width:16px;line-height:16px;text-align:center">区</div>
<div class="c" style="position:absolute;left:1370px;top:558px;line-height:16px;white-space:pre">6</div>
<div class="k" style="position:absolute;left:1410px;top:556px;width:16px;line-height:16px;text-align:center">主</div>
<div class="k" style="position:absolute;left:1426px;top:556px;width:16px;line-height:16px;text-align:center">要</div>
<div class="c" style="position:absolute;left:1578px;top:558px;line-height:16px;white-space:pre">200</div>
<div class="c" style="position:absolute;left:1610px;top:558px;line-height:16px;white-space:pre">GB</div>
<div class="c" style="position:absolute;left:1650px;top:558px;line-height:16px;white-space:pre">265</div>
<div class="c" style="position:absolute;left:1682px;top:558px;line-height:16px;white-space:pre">GB</div>
<div class="c" style="position:absolute;left:1274px;top:590px;line-height:16px;white-space:pre">DISKPART&gt;</div>
<div style="position:absolute;left:1708px;top:476px;line-height:18px;white-space:pre;color:#e8383a;font-size:16px;line-height:18px;-webkit-text-stroke:0">MAC引导</div>
<div style="position:absolute;left:1707px;top:491px;line-height:18px;white-space:pre;color:#e8383a;font-size:16px;line-height:18px;-webkit-text-stroke:0">MAC系统</div>
<div style="position:absolute;left:1707px;top:511px;line-height:18px;white-space:pre;color:#e8383a;font-size:16px;line-height:18px;-webkit-text-stroke:0">MAC恢复分区</div>
<div style="position:absolute;left:1707px;top:531px;line-height:18px;white-space:pre;color:#e8383a;font-size:16px;line-height:18px;-webkit-text-stroke:0">WIndows EFI启动信息</div>
<div style="position:absolute;left:1707px;top:551px;line-height:18px;white-space:pre;color:#e8383a;font-size:16px;line-height:18px;-webkit-text-stroke:0">C盘</div>
<div style="position:absolute;left:1707px;top:571px;line-height:18px;white-space:pre;color:#e8383a;font-size:16px;line-height:18px;-webkit-text-stroke:0">D盘</div>
</body></html>
